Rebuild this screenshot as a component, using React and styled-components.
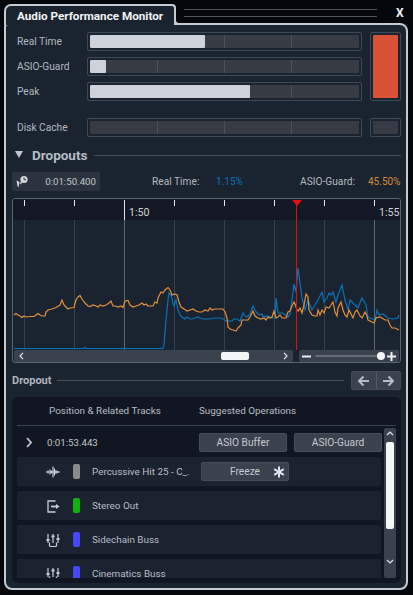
import React from "react";
import styled, { createGlobalStyle } from "styled-components";

const Global = createGlobalStyle`
  html, body { margin: 0; padding: 0; background: #04070b; height: 100%; overflow: hidden; }
  * { box-sizing: border-box; }
  #root { font-family: Roboto, "Open Sans", "Liberation Sans", sans-serif; font-size: 10.2px; color: #b9bec5; }
`;

const Frame = styled.div`
  width: 413px; height: 595px; padding: 4px 5px 5px 4px;
  display: flex; flex-direction: column;
`;
const TitleBar = styled.div`display: flex; height: 21px; flex: none;`;
const Tab = styled.div`
  position: relative; z-index: 1; width: 172px; height: 21px; padding: 3px 0 0 11px;
  background: #192430; border: 2px solid #c4cbd1; border-bottom: none; border-radius: 7px 4px 0 0;
  font-size: 11.7px; font-weight: 700; color: #f2f4f6; white-space: nowrap; line-height: 15px;
  &::after {
    content: ""; position: absolute; left: 100%; bottom: 0; width: 7px; height: 7px;
    border-left: 2px solid #c4cbd1; border-bottom: 2px solid #c4cbd1; border-bottom-left-radius: 5px;
    background: #04070b;
  }
`;
const Grip = styled.div`
  margin: 5px 0 0 8px; width: 193px; height: 8px; flex: none;
  border-top: 1px solid #50565f; border-bottom: 1px solid #50565f;
`;
const Close = styled.div`
  margin: 1px 0 0 19px; font-size: 12px; font-weight: 700; color: #f2f4f6; line-height: 17px;
`;
const Panel = styled.div`
  flex: 1; min-height: 0; margin-top: -2px; padding: 7px 5px 5px 6px;
  background: #192430; border: 2px solid #c4cbd1; border-radius: 4px 8px 8px 8px;
  display: flex; flex-direction: column;
`;
const Meters = styled.div`
  display: grid; grid-template-columns: 70px 275px 8px 31px; grid-auto-rows: 19px;
  row-gap: 6px; padding-left: 5px;
`;
const MeterLabel = styled.div`grid-column: 1; align-self: center; line-height: 14px; color: #b4b9bf; font-size: 10.2px;`;
const Track = styled.div`
  grid-column: 2; padding: 2px; border: 1px solid #3e4957; border-radius: 2px;
`;
const TrackInner = styled.div`
  position: relative; height: 100%; background: #373b44; border-radius: 1px; overflow: hidden;
  background-image: linear-gradient(90deg,
    transparent 66.6px, #4b505a 66.6px, #4b505a 67.6px, transparent 67.6px,
    transparent 133.6px, #4b505a 133.6px, #4b505a 134.6px, transparent 134.6px,
    transparent 200.6px, #4b505a 200.6px, #4b505a 201.6px, transparent 201.6px);
`;
const Fill = styled.div`
  height: 100%; background: #cdd2db; border-radius: 1px; width: ${p => p.$w}px;
`;
const Alarm = styled.div`
  grid-column: 4; grid-row: ${p => p.$rows}; padding: 2px; border: 1px solid #3e4957; border-radius: 2px;
`;
const AlarmFill = styled.div`height: 100%; border-radius: 1px; background: ${p => p.$c};`;
const DiskRow = styled(Meters)`margin-top: 17px;`;

const SectionHead = styled.div`
  margin-top: 10px; height: 16px; display: flex; align-items: center; padding-left: 3px;
`;
const Caret = styled.div`
  width: 0; height: 0; border-left: 4px solid transparent; border-right: 4px solid transparent;
  border-top: 7px solid #c3c8ce; margin-right: 9px; margin-top: -1px;
`;
const SectionTitle = styled.div`font-size: 13.5px; font-weight: 700; color: #b7bcc3; line-height: 16px; margin-top: -1px;`;
const Rule = styled.div`flex: 1; height: 1px; background: #454e5b; margin-left: ${p => p.$ml}px; margin-right: ${p => p.$mr || 0}px;`;

const Toolbar = styled.div`margin-top: 9px; height: 19px; display: flex; align-items: center; flex: none;`;
const TimeBox = styled.div`
  width: 88px; height: 19px; background: #2b3340; border-radius: 2px; display: flex;
  align-items: center; justify-content: space-between; padding: 0 4px;
  color: #c0c5cb; font-size: 9.7px;
`;
const StatLabel = styled.div`width: ${p => p.$w}px; margin-left: ${p => p.$ml}px; color: #b4b9bf; font-size: 10.2px;`;
const StatValue = styled.div`width: ${p => p.$w}px; color: ${p => p.$c}; font-size: 10px; white-space: nowrap;`;

const Chart = styled.div`
  position: relative; margin-top: 7px; height: 165px; flex: none;
  border: 1px solid #5b6572; border-radius: 3px; display: flex; flex-direction: column;
`;
const Ruler = styled.div`
  height: 21px; flex: none; background: #121824; padding-left: 11px; display: flex;
  border-radius: 2px 2px 0 0;
`;
const RulerCell = styled.div`width: ${p => p.$w}px; flex: none; display: flex; align-items: flex-start; white-space: nowrap;`;
const RulerTick = styled.div`
  width: 1px; flex: none; margin-top: 1px; height: ${p => p.$major ? "20px" : "6px"};
  background: #e4e7ea;
`;
const RulerText = styled.div`font-size: 10.6px; color: #ced2d7; margin: 6px 0 0 4px; line-height: 15px;`;
const Plot = styled.svg`display: block; width: 387px; height: 130px; flex: none; background: #192430;`;
const Playhead = styled.div`
  position: absolute; left: 283px; top: 1px; width: 0; height: 150px; border-left: 1px solid #e00f12;
  &::before {
    content: ""; position: absolute; left: -5.5px; top: 0; width: 0; height: 0;
    border-left: 5px solid transparent; border-right: 5px solid transparent; border-top: 6px solid #e00f12;
  }
`;
const ChartFoot = styled.div`height: 12px; flex: none; display: flex; gap: 6px; padding: 0 1px; align-items: stretch;`;
const HScroll = styled.div`
  width: 279px; background: #3a424e; border-radius: 2px; display: flex; align-items: center;
  justify-content: space-between; padding: 0 5px; position: relative;
`;
const HThumb = styled.div`
  position: absolute; left: 207px; top: 2px; width: 28px; height: 8px; border-radius: 2px; background: #f4f5f6;
`;
const ZoomBox = styled.div`
  width: 100px; background: #3a424e; border-radius: 2px; display: flex; align-items: center; padding: 0 3px;
`;
const ZoomIcon = styled.svg`flex: none; display: block;`;
const ZoomTrack = styled.div`
  width: 66px; height: 2px; margin-left: 4px; background: #646c77; border-radius: 1px; flex: none;
`;
const ZoomKnob = styled.div`width: 8px; height: 8px; border-radius: 50%; background: #f6f7f8; flex: none; margin: 0 2px 0 -4px;`;

const DropoutHead = styled.div`margin-top: 8px; height: 19px; display: flex; align-items: center; flex: none;`;
const DropoutTitle = styled.div`font-size: 11px; font-weight: 700; color: #b0b5bb;`;
const ArrowPair = styled.div`
  width: 50px; height: 19px; background: #3a424e; border-radius: 2px; display: flex; flex: none;
  border: 1px solid #434b57;
`;
const ArrowBtn = styled.div`
  flex: 1; display: flex; align-items: center; justify-content: center;
  & + & { border-left: 1px solid #525a66; }
`;

const List = styled.div`
  margin-top: 7px; height: 186px; flex: none; background: #111722; border-radius: 6px; padding: 0 5px 5px;
  display: flex; flex-direction: column;
`;
const ListHead = styled.div`
  height: 29px; flex: none; border-bottom: 1px solid #3a4350; display: flex; align-items: center; padding-bottom: 1px;
`;
const HeadCell = styled.div`width: ${p => p.$w}px; margin-left: ${p => p.$ml || 0}px; color: #b9bec5; font-size: 9.9px; white-space: nowrap;`;
const ListBody = styled.div`margin-top: 2px; height: 150px; display: flex; overflow: hidden; flex: none;`;
const RowsCol = styled.div`width: 367px; flex: none; display: flex; flex-direction: column; gap: 5px;`;
const DropRow = styled.div`
  height: 29px; flex: none; display: flex; align-items: center; margin-bottom: -5px;
`;
const Chevron = styled.div`width: 30px; padding-left: 9px; flex: none; display: flex;`;
const Time = styled.div`width: 152px; flex: none; color: #c0c5cb; font-size: 9.7px;`;
const Button = styled.div`
  width: 88px; height: 19px; flex: none; background: #3a424e; border: 1px solid #464e5a; border-radius: 2px;
  display: flex; align-items: center; justify-content: center; color: #c6cad0; font-size: 10.2px;
  margin-left: ${p => p.$ml || 0}px; position: relative;
`;
const BtnIcon = styled.svg`position: absolute; right: 3px; top: 3px;`;
const TrackRow = styled.div`
  height: 29px; flex: none; margin-right: 3px; background: #1b2230; border-radius: 3px;
  display: flex; align-items: center; padding-left: 28px;
`;
const TrackIcon = styled.svg`width: 16px; height: 16px; flex: none; display: block;`;
const Chip = styled.div`
  width: 7px; height: 15px; flex: none; margin: 0 12px; border-radius: 2px; background: ${p => p.$c};
`;
const TrackName = styled.div`width: 109px; flex: none; white-space: nowrap; color: #b9bec5; font-size: 9.9px;`;
const VScroll = styled.div`
  width: 12px; flex: none; background: #3a424e; border-radius: 2px; display: flex; flex-direction: column;
  align-items: center; height: 150px; padding-top: 3px;
`;
const VThumb = styled.div`width: 8px; height: 87px; margin: 6px 0 30px; background: #f4f5f6; border-radius: 2px; flex: none;`;

const orange = "14,315 16,313.5 18,315 20,316 22,317.5 24,316 26,317 30,316.5 34,316.5 36,315 38,313.5 40,315 42,316 45,316 46,312 48,310 52,309 56,307.5 60,305 62,300 64,305 66,307 68,309 70,308 74,307.5 76,300 78,297 80,295.5 82,299 85,303 88,306 90,306.5 93,305 96,306 98,307 100,305 103,306 106,305 109,303 111,301 113,306 115,306 118,307 121,306 123,307.5 125,301 128,300.5 130,305 133,307 136,306 139,305 142,303 144,305 146,304 148,306 150,306 153,306 155,302 157,303 158,298 161,292 163,293 165,290 168,287.5 170,290 172,295 175,294 177,295 179,302 181,307 184,309 187,311 190,310 193,309 196,311 199,312 202,312 205,310 208,311 210,308 212,310 215,309 218,309 223,309 225,312 227,318 228,327 230,329 233,330 236,331 238,328 241,325 242,320 245,320 248,320 250,317 253,311 255,316 258,318 261,319 264,318 266,320 268,317 270,318 272,317 274,311 276,318 278,317 280,315 282,318 286,318 288,312 290,311 292,306 294,302 295,304 297,310 298,311 300,308 302,313 304,305 306,294 308,297 309,310 312,315 315,316 317,316 318,310 320,315 322,310 324,313 326,307 329,308 331,305 333,302 335,312 337,316 338,308 341,302 343,310 345,315 347,317 349,310 352,316 353,318 355,312 357,310 360,316 362,318 365,312 367,316 368,320 372,322 374,323 376,318 380,317 382,318 385,320 388,320 390,325 392,328 395,328 399,330";
const blue = "14,348.5 83,348.5 84,348 85,347.5 86,348.5 163,348.5 164,345 166,320 168,300 169,293 171,295 173,303 174,306 176,300 178,310 180,315 182,317 185,319 187,317 190,319 192,319 195,318 198,317 200,318 203,319 205,319 210,319 215,318 220,318 223,319 226,321 230,321 232,321 234,319 237,319 240,321 243,313 245,316 247,317 250,314 253,306 255,310 257,313 260,315 262,314 263,317 268,316 272,318 275,318 276,298 278,313 283,313 288,317 290,314 292,300 294,284 296,292 298,268 300,283 302,298 305,310 308,300 312,310 315,305 318,300 322,292 324,302 327,298 329,293 331,295 333,292 336,302 338,295 342,285 345,300 348,310 350,300 355,305 358,308 362,298 366,305 368,317 375,320 377,310 379,315 383,314 388,318 393,319 398,318 399,315";

const Wave = () => (
  <TrackIcon viewBox="0 0 16 16">
    <path d="M1 8h14M3 6.5v3M5 5.5v5M6.5 6.5v3M8 2.5v11M9.5 4.5v7M11 6v4M12.5 7v2" fill="none" stroke="#d2d6db" strokeWidth="1.1" />
  </TrackIcon>
);
const Out = () => (
  <TrackIcon viewBox="0 0 16 16">
    <path d="M10.5 3H3v11h7.5" fill="none" stroke="#c9ced4" strokeWidth="1.3" />
    <path d="M6 8.5h6" stroke="#c9ced4" strokeWidth="1.8" />
    <path d="M11 6l3.5 2.5L11 11z" fill="#c9ced4" />
  </TrackIcon>
);
const Mixer = () => (
  <TrackIcon viewBox="0 0 16 16">
    <path d="M3 2v9M8 2v9M13 2v9" stroke="#c9ced4" strokeWidth="1.2" fill="none" />
    <path d="M1.5 8h3M6.5 4.5h3M11.5 7h3" stroke="#c9ced4" strokeWidth="2" fill="none" />
    <path d="M4.5 10.5V13.5c0 .6.5 1 1 1h5c.5 0 1-.4 1-1V10.5" stroke="#c9ced4" strokeWidth="1.2" fill="none" />
  </TrackIcon>
);

const tracks = [
  { icon: <Wave />, c: "#8b8b8b", name: "Percussive Hit 25 - C_.", freeze: true },
  { icon: <Out />, c: "#0eb30e", name: "Stereo Out" },
  { icon: <Mixer />, c: "#4747f6", name: "Sidechain Buss" },
  { icon: <Mixer />, c: "#4747f6", name: "Cinematics Buss" },
];
const ticks = [
  { w: 50 }, { w: 50 }, { w: 50, major: true, text: "1:50" }, { w: 50 }, { w: 50 }, { w: 50 }, { w: 50 }, { w: 26, text: "1:55" },
];
const grid = [24, 74, 124, 174, 224, 274, 324, 374];

export default function App() {
  return (
    <Frame>
      <Global />
      <TitleBar>
        <Tab>Audio Performance Monitor</Tab>
        <Grip />
        <Close>X</Close>
      </TitleBar>
      <Panel>
        <Meters>
          <MeterLabel>Real Time</MeterLabel>
          <Track><TrackInner><Fill $w={115} /></TrackInner></Track>
          <Alarm $rows="1 / span 3"><AlarmFill $c="#d95236" /></Alarm>
          <MeterLabel>ASIO-Guard</MeterLabel>
          <Track><TrackInner><Fill $w={16} /></TrackInner></Track>
          <MeterLabel>Peak</MeterLabel>
          <Track><TrackInner><Fill $w={160} /></TrackInner></Track>
        </Meters>
        <DiskRow>
          <MeterLabel>Disk Cache</MeterLabel>
          <Track><TrackInner /></Track>
          <Alarm $rows="1"><AlarmFill $c="#373b44" /></Alarm>
        </DiskRow>

        <SectionHead>
          <Caret />
          <SectionTitle>Dropouts</SectionTitle>
          <Rule $ml={7} />
        </SectionHead>

        <Toolbar>
          <TimeBox>
            <svg width="12" height="13" viewBox="0 0 12 13">
              <circle cx="8" cy="4.5" r="3.6" fill="#d3d7dc" />
              <path d="M8 2.5v2.2h2" fill="none" stroke="#2b3340" strokeWidth="1" />
              <path d="M0.5 5.5l3 1.5-1 5.5-1-1.5z" fill="#d3d7dc" />
              <path d="M3.5 8l2-1.5v3z" fill="#d3d7dc" />
            </svg>
            <span>0:01:50.400</span>
          </TimeBox>
          <StatLabel $ml={52} $w={64}>Real Time:</StatLabel>
          <StatValue $w={84} $c="#0a72b8">1.15%</StatValue>
          <StatLabel $ml={0} $w={68}>ASIO-Guard:</StatLabel>
          <StatValue $w={33} $c="#d88a35">45.50%</StatValue>
        </Toolbar>

        <Chart>
          <Ruler>
            {ticks.map((t, i) => (
              <RulerCell key={i} $w={t.w}>
                <RulerTick $major={t.major} />
                {t.text && <RulerText>{t.text}</RulerText>}
              </RulerCell>
            ))}
          </Ruler>
          <Plot viewBox="13 220 387 130">
            {grid.map(x => (
              <line key={x} x1={x + 0.5} x2={x + 0.5} y1="220" y2="350"
                stroke={x === 124 || x === 374 ? "#5c6570" : "#36414f"} strokeWidth="1" />
            ))}
            <polyline points={blue} fill="none" stroke="#0a72b8" strokeWidth="1.2" />
            <polyline points={orange} fill="none" stroke="#e58f3a" strokeWidth="1.2" />
          </Plot>
          <Playhead />
          <ChartFoot>
            <HScroll>
              <svg width="5" height="8" viewBox="0 0 5 8"><path d="M4 .8L1 4l3 3.2" fill="none" stroke="#e3e6e9" strokeWidth="1.2" /></svg>
              <svg width="5" height="8" viewBox="0 0 5 8"><path d="M1 .8L4 4 1 7.2" fill="none" stroke="#e3e6e9" strokeWidth="1.2" /></svg>
              <HThumb />
            </HScroll>
            <ZoomBox>
              <ZoomIcon width="9" height="9" viewBox="0 0 9 9"><path d="M0 4.5h9" stroke="#eceef0" strokeWidth="2" /></ZoomIcon>
              <ZoomTrack />
              <ZoomKnob />
              <ZoomIcon width="9" height="9" viewBox="0 0 9 9"><path d="M0 4.5h9M4.5 0v9" stroke="#eceef0" strokeWidth="2" /></ZoomIcon>
            </ZoomBox>
          </ChartFoot>
        </Chart>

        <DropoutHead>
          <DropoutTitle>Dropout</DropoutTitle>
          <Rule $ml={5} $mr={7} />
          <ArrowPair>
            <ArrowBtn>
              <svg width="13" height="12" viewBox="0 0 13 12"><path d="M12 6H2M6.5 1.5L2 6l4.5 4.5" fill="none" stroke="#b6bcc4" strokeWidth="2" /></svg>
            </ArrowBtn>
            <ArrowBtn>
              <svg width="13" height="12" viewBox="0 0 13 12"><path d="M1 6h10M6.5 1.5L11 6l-4.5 4.5" fill="none" stroke="#b6bcc4" strokeWidth="2" /></svg>
            </ArrowBtn>
          </ArrowPair>
        </DropoutHead>

        <List>
          <ListHead>
            <HeadCell $ml={32} $w={150}>Position &amp; Related Tracks</HeadCell>
            <HeadCell $w={110}>Suggested Operations</HeadCell>
          </ListHead>
          <ListBody>
            <RowsCol>
              <DropRow>
                <Chevron>
                  <svg width="6" height="11" viewBox="0 0 6 11"><path d="M1 1l4 4.5L1 10" fill="none" stroke="#c4c9cf" strokeWidth="1.7" /></svg>
                </Chevron>
                <Time>0:01:53.443</Time>
                <Button>ASIO Buffer</Button>
                <Button $ml={7}>ASIO-Guard</Button>
              </DropRow>
              {tracks.map(t => (
                <TrackRow key={t.name}>
                  {t.icon}
                  <Chip $c={t.c} />
                  <TrackName>{t.name}</TrackName>
                  {t.freeze && (
                    <Button>
                      Freeze
                      <BtnIcon viewBox="0 0 12 12" width="12" height="12">
                        <path d="M6 .5v11M1.2 3.2l9.6 5.6M10.8 3.2L1.2 8.8" stroke="#dfe2e6" strokeWidth="2" fill="none" />
                      </BtnIcon>
                    </Button>
                  )}
                </TrackRow>
              ))}
            </RowsCol>
            <VScroll>
              <svg width="8" height="5" viewBox="0 0 8 5"><path d="M1 4l3-3 3 3" fill="none" stroke="#e3e6e9" strokeWidth="1.2" /></svg>
              <VThumb />
              <svg width="8" height="5" viewBox="0 0 8 5"><path d="M1 1l3 3 3-3" fill="none" stroke="#e3e6e9" strokeWidth="1.2" /></svg>
            </VScroll>
          </ListBody>
        </List>
      </Panel>
    </Frame>
  );
}
